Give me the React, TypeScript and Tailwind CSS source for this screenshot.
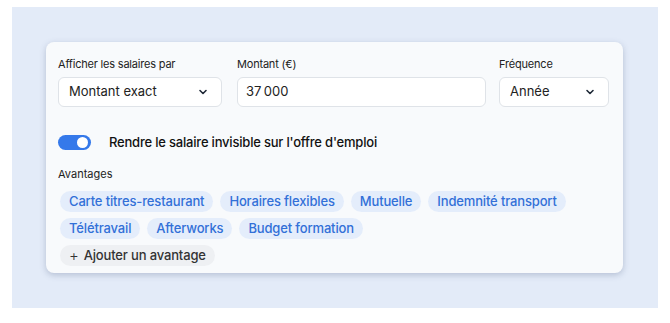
import React from "react";

const Chevron = () => (
  <svg width="12" height="12" viewBox="0 0 24 24" fill="none" stroke="#1f2937" strokeWidth="3.2" strokeLinecap="round" strokeLinejoin="round">
    <path d="M6 9l6 6 6-6" />
  </svg>
);

const Chip = ({ children }: { children: React.ReactNode }) => (
  <span className="h-[21px] flex items-center px-[9px] rounded-full bg-[#e4edfb] text-[#3270d8] text-[13px] font-medium tracking-[-0.15px] leading-none">
    {children}
  </span>
);

export default function App() {
  return (
    <div className="w-[670px] h-[323px] bg-white pt-[7px] pl-[12px]" style={{ fontFamily: "Inter, 'Noto Sans', sans-serif" }}>
      <div className="w-[646px] h-[301px] bg-[#e3ebf8] pt-[35px] pl-[34px]">
        <div className="w-[577px] h-[231px] bg-[#f8fafc] rounded-[8px] shadow-[0_2px_6px_rgba(60,80,120,0.28)] pt-[14px] pl-[12px]">
          <div className="flex">
            <div className="w-[164px]">
              <div className="text-[11px] tracking-[-0.2px] text-[#222] leading-[16px] mb-[5px]">Afficher les salaires par</div>
              <div className="h-[30px] rounded-[6px] border border-[#dfe3e8] bg-white flex items-center justify-between pl-[10px] pr-[12px] text-[13px] text-[#222]">
                <span>Montant exact</span>
                <Chevron />
              </div>
            </div>
            <div className="w-[249px] ml-[15px]">
              <div className="text-[11px] tracking-[-0.2px] text-[#222] leading-[16px] mb-[5px]">Montant (€)</div>
              <div className="h-[30px] rounded-[6px] border border-[#dfe3e8] bg-white flex items-center pl-[8px] text-[13px] text-[#222]">
                37{"\u202F"}000
              </div>
            </div>
            <div className="w-[110px] ml-[13px]">
              <div className="text-[11px] tracking-[-0.2px] text-[#222] leading-[16px] mb-[5px]">Fréquence</div>
              <div className="h-[30px] rounded-[6px] border border-[#dfe3e8] bg-white flex items-center justify-between pl-[10px] pr-[12px] text-[13px] text-[#222]">
                <span>Année</span>
                <Chevron />
              </div>
            </div>
          </div>
          <div className="flex items-center mt-[28px] h-[15px]">
            <div className="w-[33px] h-[15px] rounded-full bg-[#3579ea] flex items-center justify-end pr-[3px]">
              <div className="w-[11px] h-[11px] rounded-full bg-white" />
            </div>
            <span className="ml-[18px] text-[13px] font-medium tracking-[-0.2px] text-[#111]">Rendre le salaire invisible sur l'offre d'emploi</span>
          </div>
          <div className="mt-[16px] text-[11px] text-[#222] leading-[16px]">Avantages</div>
          <div className="mt-[9px] pl-[2px] flex flex-col gap-y-[6px]">
            <div className="w-[520px] flex flex-wrap gap-x-[7px] gap-y-[6px]">
              <Chip>Carte titres-restaurant</Chip>
              <Chip>Horaires flexibles</Chip>
              <Chip>Mutuelle</Chip>
              <Chip>Indemnité transport</Chip>
              <Chip>Télétravail</Chip>
              <Chip>Afterworks</Chip>
              <Chip>Budget formation</Chip>
            </div>
            <div className="flex">
              <span className="h-[21px] flex items-center px-[9px] rounded-full bg-[#eef0f3] text-[#333] text-[13px] font-medium tracking-[-0.15px] leading-none">
                <span className="mr-[5px] text-[15px] font-light">+</span>Ajouter un avantage
              </span>
            </div>
          </div>
        </div>
      </div>
    </div>
  );
}
